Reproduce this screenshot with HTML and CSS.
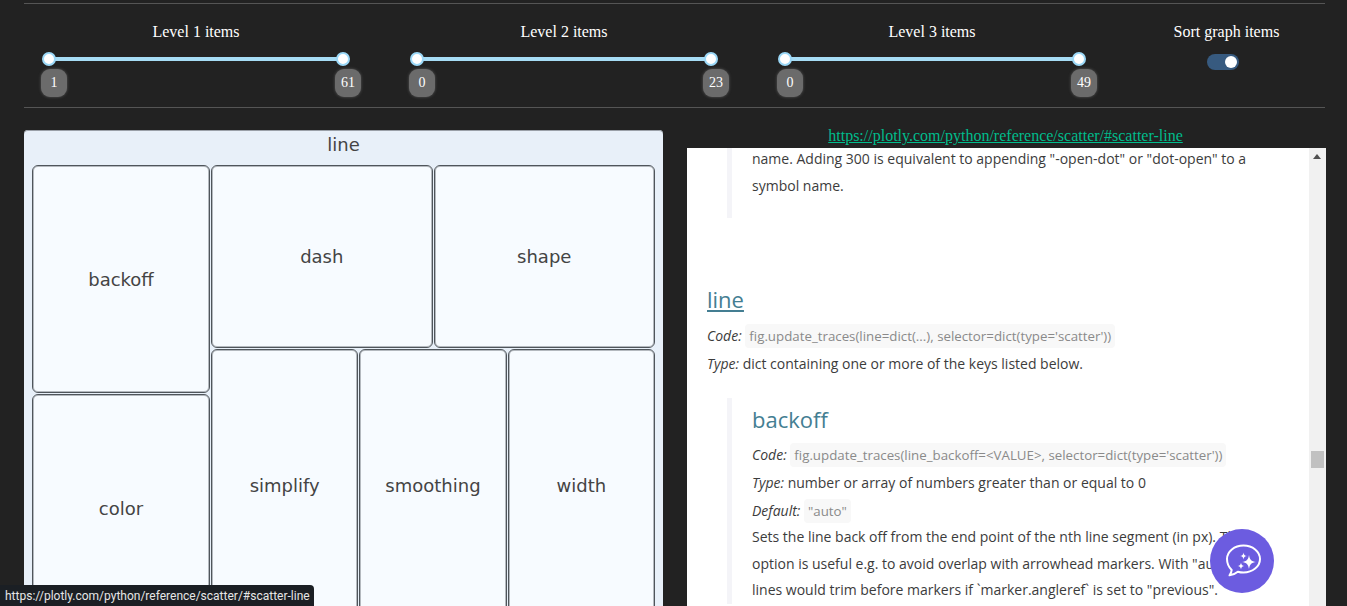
FILE: index.html
```html
<!DOCTYPE html>
<html lang="en">
<head>
  <meta charset="UTF-8" />
  <title>Plotly reference treemap</title>
  <link rel="stylesheet" href="styles.css">
</head>
<body>
  <hr class="rule rule-top" />

  <div class="controls">
    <div class="control">
      <div class="control-label">Level 1 items</div>
      <div class="track"><span class="handle"></span><span class="handle"></span></div>
      <div class="badges"><span class="badge">1</span><span class="badge">61</span></div>
    </div>
    <div class="control">
      <div class="control-label">Level 2 items</div>
      <div class="track"><span class="handle"></span><span class="handle"></span></div>
      <div class="badges"><span class="badge">0</span><span class="badge">23</span></div>
    </div>
    <div class="control">
      <div class="control-label">Level 3 items</div>
      <div class="track"><span class="handle"></span><span class="handle"></span></div>
      <div class="badges"><span class="badge">0</span><span class="badge">49</span></div>
    </div>
    <div class="control">
      <div class="control-label">Sort graph items</div>
      <div class="switch"><span class="switch-knob"></span></div>
    </div>
  </div>

  <hr class="rule" />

  <div class="main">
    <div class="treemap">
      <div class="treemap-title">line</div>
      <div class="treemap-body">
        <div class="tm-left">
          <div class="tile tile-backoff">backoff</div>
          <div class="tile">color</div>
        </div>
        <div class="tm-right">
          <div class="tm-row-top">
            <div class="tile">dash</div>
            <div class="tile">shape</div>
          </div>
          <div class="tm-row-bottom">
            <div class="tile">simplify</div>
            <div class="tile">smoothing</div>
            <div class="tile">width</div>
          </div>
        </div>
      </div>
    </div>

    <div class="docs">
      <a class="docs-link" href="#">https://plotly.com/python/reference/scatter/#scatter-line</a>
      <div class="docs-frame">
        <div class="docs-content">
          <div class="quote quote-first">
            <p>name. Adding 300 is equivalent to appending "-open-dot" or "dot-open" to a symbol name.</p>
          </div>

          <h3 class="attr-title"><a href="#">line</a></h3>
          <p class="meta"><em>Code:</em> <code>fig.update_traces(line=dict(...), selector=dict(type='scatter'))</code></p>
          <p class="meta"><em>Type:</em> dict containing one or more of the keys listed below.</p>

          <div class="quote quote-second">
            <h4 class="sub-title">backoff</h4>
            <p class="meta"><em>Code:</em> <code>fig.update_traces(line_backoff=&lt;VALUE&gt;, selector=dict(type='scatter'))</code></p>
            <p class="meta"><em>Type:</em> number or array of numbers greater than or equal to 0</p>
            <p class="meta"><em>Default:</em> <code>"auto"</code></p>
            <p class="desc">Sets the line back off from the end point of the nth line segment (in px). This option is useful e.g. to avoid overlap with arrowhead markers. With "auto" the lines would trim before markers if `marker.angleref` is set to "previous".</p>
          </div>
        </div>
        <div class="scrollbar">
          <span class="scroll-arrow"></span>
          <span class="scroll-thumb"></span>
        </div>
      </div>
    </div>
  </div>

  <button class="chat-button" aria-label="Chat">
    <svg width="38" height="38" viewBox="0 0 38 38" fill="none">
      <path d="M20.5 3.500c9.100 0 16.500 6 16.500 13.500S29.600 30.500 20.500 30.500c-2 0-3.900-.3-5.700-.8-2 1.700-4.800 3.200-8.300 3.600 1.200-1.500 2-3.200 2.200-5.400C5.800 25.200 4 21.300 4 17 4 9.500 11.400 3.500 20.500 3.500z" stroke="#fff" stroke-width="2" stroke-linejoin="round"/>
      <path d="M26 13c.7 4.500 2.300 6.300 7 7-4.700.7-6.300 2.500-7 7-.7-4.500-2.300-6.300-7-7 4.700-.7 6.300-2.500 7-7z" fill="#fff"/>
      <path d="M20.500 10.500c.3 2.300 1.200 3.200 3.500 3.500-2.300.3-3.200 1.200-3.500 3.500-.3-2.300-1.200-3.200-3.500-3.500 2.300-.3 3.200-1.200 3.500-3.500z" fill="#fff"/>
      <path d="M18 20.500c.3 2.300 1.200 3.200 3.500 3.500-2.300.3-3.200 1.200-3.500 3.500-.3-2.300-1.200-3.200-3.500-3.500 2.300-.3 3.200-1.200 3.500-3.500z" fill="#fff"/>
    </svg>
  </button>

  <div class="status-tip">https://plotly.com/python/reference/scatter/#scatter-line</div>
</body>
</html>
```

FILE: styles.css
```css
html, body {
  height: 100%;
  overflow: hidden;
}

body {
  margin: 0;
  background-color: #222;
  color: #fff;
  font-family: "Liberation Serif", serif;
  font-size: 16px;
}

.rule {
  height: 1px;
  margin: 0 22px 0 24px;
  border: none;
  background-color: #555;
}

.rule-top {
  margin-top: 3px;
}

/* slider row */
.controls {
  display: grid;
  grid-template-columns: repeat(3, 344px) 1fr;
  gap: 24px;
  height: 103px;
  margin: 0 22px 0 24px;
}

.control-label {
  margin-top: 19px;
  line-height: 18px;
  text-align: center;
}

.track {
  display: flex;
  justify-content: space-between;
  align-items: center;
  height: 4px;
  margin: 16px 25px 0;
  background-color: #a6dcf5;
}

.handle {
  width: 10px;
  height: 10px;
  margin: 0 -7px;
  border: 2px solid #9bd8f7;
  border-radius: 50%;
  background-color: #fff;
}

.badges {
  display: flex;
  justify-content: space-between;
  margin: 8px 7px 0 17px;
}

.badge {
  width: 26px;
  height: 28px;
  line-height: 27px;
  border-radius: 9px;
  background-color: #6b6b6b;
  box-shadow: 0 0 3px rgba(107, 107, 107, 0.8);
  font-size: 14px;
  text-align: center;
}

.switch {
  display: flex;
  justify-content: flex-end;
  align-items: center;
  width: 32px;
  height: 16px;
  margin: 13px 0 0 79px;
  border-radius: 8px;
  background-color: #375a7f;
}

.switch-knob {
  width: 12px;
  height: 12px;
  margin-right: 2px;
  border-radius: 50%;
  background-color: #fff;
}

/* treemap + docs */
.main {
  display: flex;
  margin: 22px 21px 0 24px;
}

.treemap {
  flex: none;
  width: 639px;
  height: 520px;
  margin-right: 24px;
  border-radius: 4px;
  background-color: #e8f0f9;
  box-shadow: inset 0 1px 0 #9aa0a8;
  color: #444;
  font-family: "DejaVu Sans", sans-serif;
}

.treemap-title {
  height: 35px;
  line-height: 29px;
  font-size: 18px;
  text-align: center;
}

.treemap-body {
  display: flex;
  gap: 1px;
  height: 457px;
  padding: 0 8px;
}

.tm-left {
  display: flex;
  flex-direction: column;
  gap: 1px;
  width: 178px;
}

.tm-right {
  display: flex;
  flex-direction: column;
  gap: 1px;
  width: 444px;
}

.tm-row-top {
  display: flex;
  gap: 1px;
  height: 183px;
}

.tm-row-bottom {
  display: flex;
  flex: 1;
  gap: 1px;
}

.tile {
  display: flex;
  flex: 1;
  justify-content: center;
  align-items: center;
  box-sizing: border-box;
  min-width: 0;
  border: 1px solid #4f555b;
  border-radius: 6px;
  background-color: #f7fbff;
  box-shadow: inset 0 0 0 1px #b4b9bf;
  font-size: 18px;
}

.tile-backoff {
  flex: none;
  height: 228px;
}

.docs {
  flex: 1;
  min-width: 0;
  margin-top: -3px;
}

.docs-link {
  display: block;
  height: 21px;
  padding-right: 2px;
  line-height: 18px;
  color: #00bc8c;
  text-align: center;
}

.docs-frame {
  display: flex;
  height: 460px;
  overflow: hidden;
  background-color: #fff;
}

.docs-content {
  flex: 1;
  min-width: 0;
  padding: 0 20px;
  color: #3c3c3c;
  font-family: "Open Sans", sans-serif;
  font-size: 14px;
  line-height: 26.5px;
}

.docs-content p {
  margin: 0;
}

.docs-content .meta {
  line-height: 28px;
}

.docs-content .desc {
  margin-top: -1px;
}

.quote {
  margin-left: 20px;
  padding-left: 20px;
  border-left: 5px solid #f4f4f8;
}

.quote-first {
  margin-top: -2px;
  padding-bottom: 19px;
}

.attr-title {
  margin: 63px 0 5px;
  font-size: 22px;
  font-weight: 400;
  line-height: 36px;
}

.attr-title a {
  color: #447e92;
}

.quote-second {
  margin-top: 20px;
  padding-top: 3px;
}

.sub-title {
  margin: 0 0 4px;
  color: #447e92;
  font-size: 22px;
  font-weight: 400;
  line-height: 36px;
}

code {
  padding: 3px 4px;
  border-radius: 4px;
  background-color: #f8f8f8;
  color: #8a8a8a;
  font-family: "Open Sans", sans-serif;
  font-size: 13.3px;
}

.scrollbar {
  position: relative;
  flex: none;
  width: 17px;
  background-color: #f1f1f1;
}

.scroll-arrow {
  position: absolute;
  top: 6px;
  left: 4px;
  border-right: 4px solid transparent;
  border-bottom: 5px solid #505050;
  border-left: 4px solid transparent;
}

.scroll-thumb {
  position: absolute;
  top: 303px;
  left: 2px;
  width: 13px;
  height: 17px;
  background-color: #c1c1c1;
}

/* floating bits */
.chat-button {
  position: absolute;
  top: 529px;
  left: 1210px;
  display: flex;
  justify-content: center;
  align-items: center;
  width: 64px;
  height: 64px;
  padding: 0;
  border: none;
  border-radius: 50%;
  background-color: #6c5ce0;
}

.status-tip {
  position: absolute;
  bottom: 0;
  left: 0;
  height: 21px;
  padding: 0 4px 0 5px;
  border-top-right-radius: 4px;
  background-color: #1b1f24;
  color: #e6e6e6;
  font-family: Roboto, sans-serif;
  font-size: 12px;
  line-height: 22px;
}
```
